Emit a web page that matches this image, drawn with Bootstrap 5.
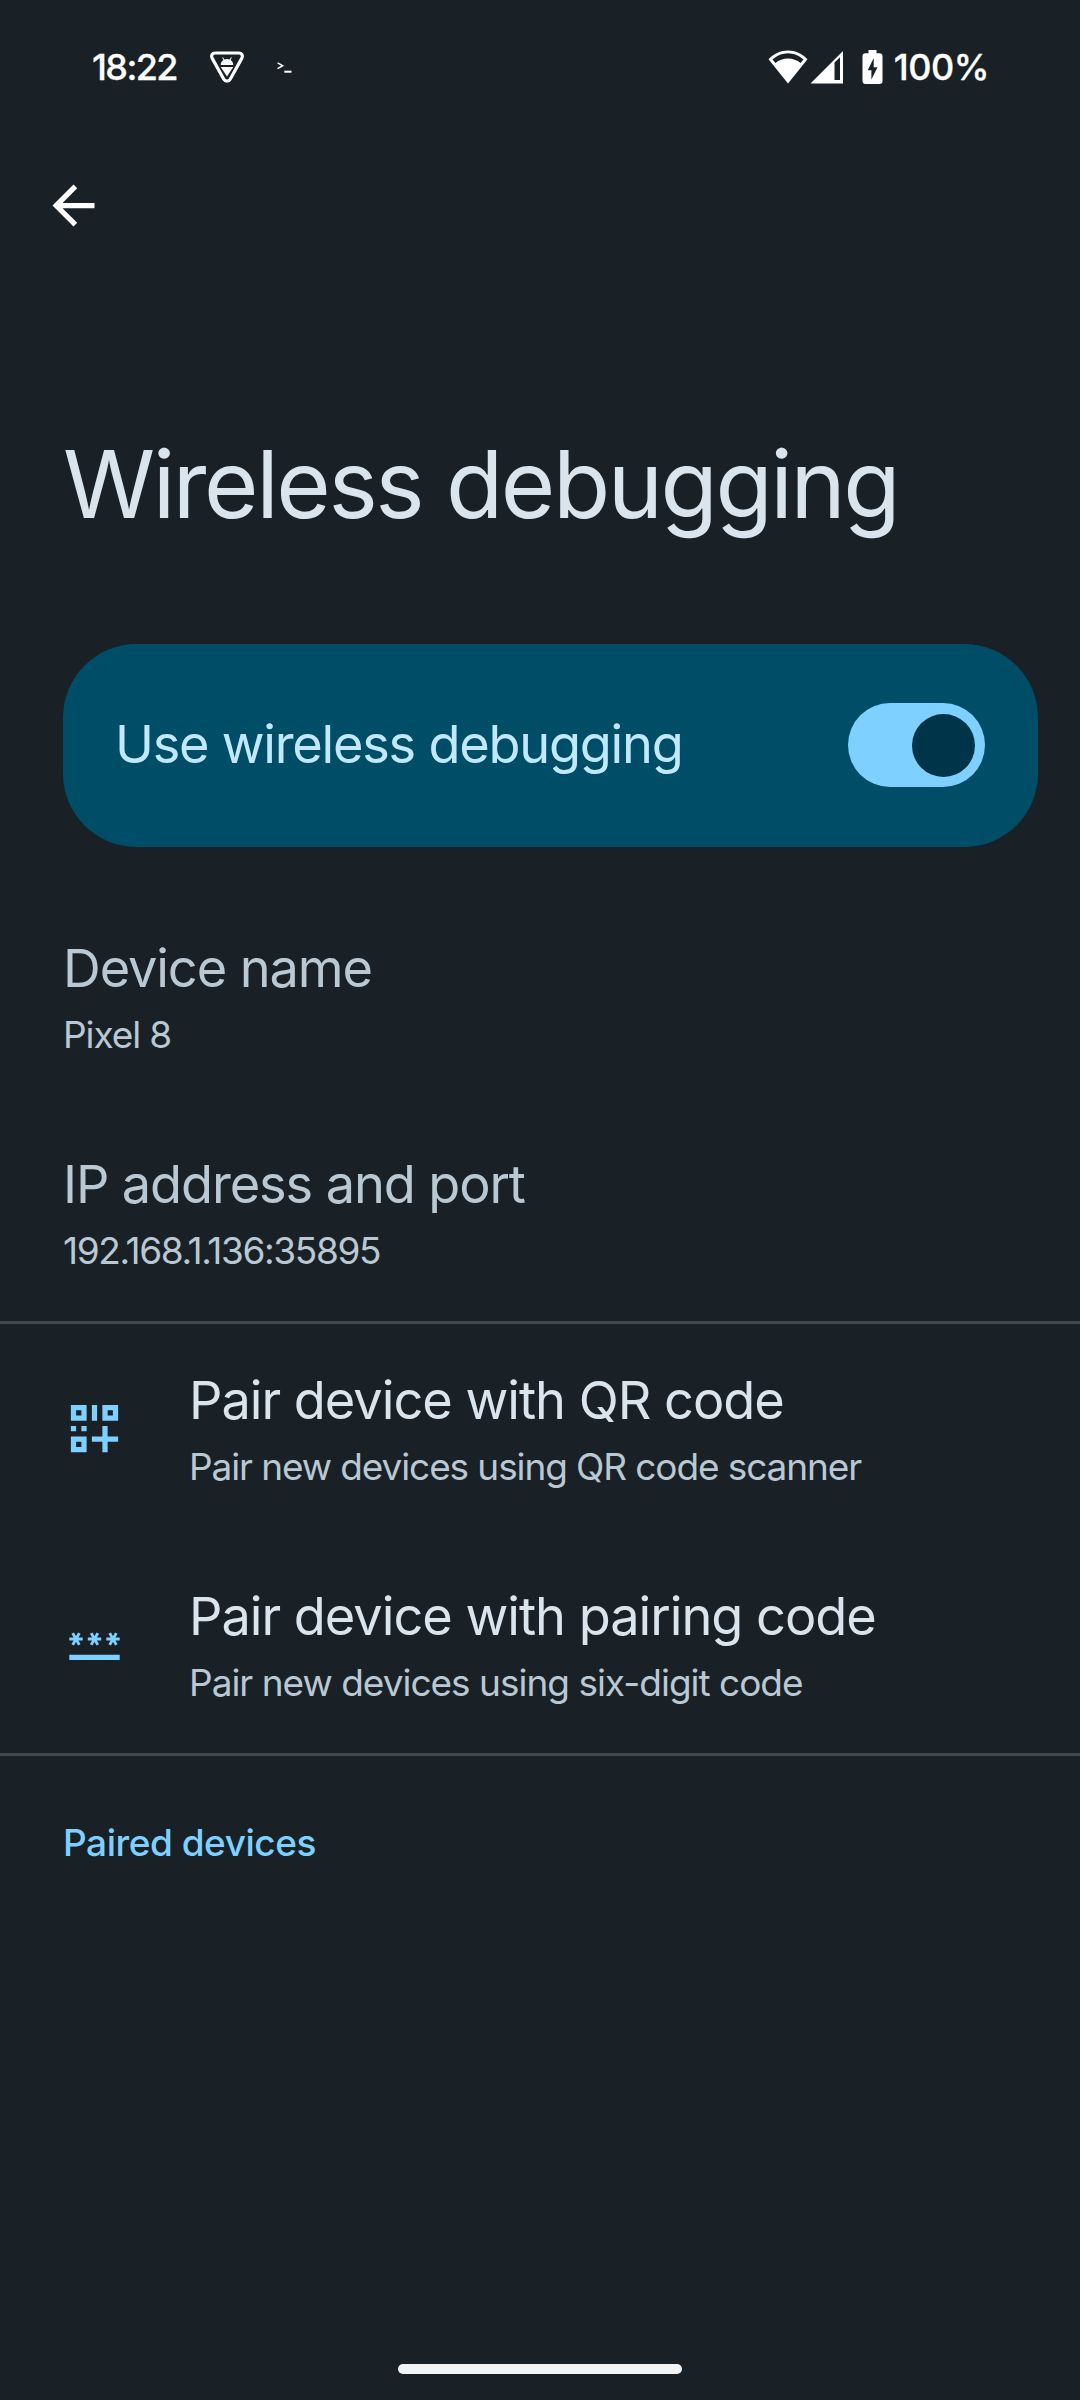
<!DOCTYPE html>
<html lang="en" data-bs-theme="dark">
<head>
<meta charset="utf-8">
<meta name="viewport" content="width=device-width, initial-scale=1">
<title>Wireless debugging</title>
<link href="https://cdn.jsdelivr.net/npm/bootstrap@5.3.0/dist/css/bootstrap.min.css" rel="stylesheet">
<script src="https://cdn.jsdelivr.net/npm/bootstrap@5.3.0/dist/js/bootstrap.bundle.min.js"></script>
<style>
body{background:#192127;color:#dae4ed;font-family:Inter,Roboto,sans-serif;}
.screen{width:1080px;height:2400px;white-space:nowrap}
.screen svg{display:block;flex:none}
.statusbar{height:134px;padding:0 91px 0 92px;color:#fff;font-size:36px;font-weight:500;line-height:50px}
.clock{letter-spacing:-1.6px;width:117px}
.clock,.percent{-webkit-text-stroke:.3px #fff}
.percent{letter-spacing:-.5px;margin-left:11px}
.terminal{margin-left:32px}
.appbar{height:290px;padding:40px 42px}
.page-title{font-size:93.5px;line-height:120px;letter-spacing:-2.45px;font-weight:400;padding-left:63px;color:#dae4ed}
.main-switch{margin:100px 42px 42px 63px;height:203px;border-radius:73.5px;background:#004d67;color:#c2e8ff;padding:0 53px 1px 52px}
.main-switch .label{font-size:52.3px;letter-spacing:-1.24px;padding-bottom:1px}
.toggle{width:137px;height:84px;border-radius:42px;background:#7dd0ff;padding:10.5px}
.thumb{width:63px;height:63px;border-radius:50%;background:#003549}
.pref{height:216px;padding:41px 63px 0}
.pref-title{font-size:52.3px;line-height:76px;letter-spacing:-1.1px}
.pref-sub{font-size:37px;line-height:58px;letter-spacing:-1.1px;color:#b9c8d3}
.muted-pref{color:#b9c8d3}
.digits{letter-spacing:-1.37px}
.tight{letter-spacing:-1px}
.divided{border-top:3px solid #40484d;padding-top:38px}
.pref-icon{width:126px;padding-top:35px;color:#7dd0ff}
.category{border-top:3px solid #40484d;padding:61.5px 63px 0;font-size:37px;line-height:50px;font-weight:500;letter-spacing:-.47px;color:#7dd0ff}
.home-pill{width:284px;height:10px;border-radius:5px;background:#f1f3f4;margin-bottom:26px}
</style>
</head>
<body>
<div class="screen d-flex flex-column overflow-hidden">
  <header class="statusbar d-flex align-items-center flex-shrink-0">
    <span class="clock">18:22</span>
    <svg width="36" height="34" viewBox="0 0 36 34" fill="none">
      <path d="M6.2 3H29.8C32.8 3 34.3 5.6 32.9 8.1L21.2 29.2C19.7 31.8 16.3 31.8 14.8 29.2L3.1 8.1C1.7 5.6 3.2 3 6.2 3Z" stroke="#fff" stroke-width="3.2"/>
      <path d="M11.7 15C11.7 12.8 12.8 11 14.4 10L13.2 7.6L14 7.2L15.4 9.4Q18 8.5 20.6 9.4L22 7.2L22.8 7.6L21.6 10C23.2 11 24.3 12.8 24.3 15ZM11.7 17H24.3L18 26.5Z" fill="#fff"/>
    </svg>
    <svg class="terminal" width="16" height="12" viewBox="0 0 16 12" fill="none" stroke="#fff">
      <path d="M.6 1.8L5.7 4.7L.6 7.6" stroke-width="1.5"/><path d="M7.3 10.7H14.5" stroke-width="2"/>
    </svg>
    <div class="d-flex align-items-center ms-auto">
      <svg width="40" height="34" viewBox="0 0 40 34" fill="#fff">
        <path fill-rule="evenodd" d="M20 33.5L.5 9.2C11-2.4 29-2.4 39.5 9.2ZM4.6 9.5L7.4 13C14.5 7 25.5 7 32.6 13L35.4 9.5C26.5 1.2 13.5 1.2 4.6 9.5Z"/>
      </svg>
      <svg style="margin-left:2px" width="34" height="34" viewBox="0 0 34 34" fill="#fff">
        <path fill-rule="evenodd" d="M.5 33.5L33 1V33.5ZM24.5 12.5V30H30V7.2Z"/>
      </svg>
      <svg style="margin-left:18px" width="21" height="34" viewBox="0 0 21 34" fill="#fff">
        <path fill-rule="evenodd" d="M6.5 0H14.5V3.3H17.5Q20.5 3.3 20.5 6.3V31Q20.5 34 17.5 34H3.5Q.5 34 .5 31V6.3Q.5 3.3 3.5 3.3H6.5ZM11.7 8L5.8 20.3H9.4V29.4L15.5 17.2H11.7Z"/>
      </svg>
      <span class="percent">100%</span>
    </div>
  </header>
  <nav class="appbar flex-shrink-0">
    <svg width="63" height="63" viewBox="0 0 24 24" fill="#fff"><path d="M20 11H7.83l5.59-5.59L12 4l-8 8 8 8 1.41-1.41L7.83 13H20z"/></svg>
  </nav>
  <h1 class="page-title mb-0">Wireless debugging</h1>
  <section class="main-switch d-flex align-items-center justify-content-between flex-shrink-0">
    <span class="label">Use wireless debugging</span>
    <div class="toggle d-flex justify-content-end" role="switch" aria-checked="true"><div class="thumb"></div></div>
  </section>
  <main>
    <div class="pref muted-pref">
      <div class="pref-title">Device name</div>
      <div class="pref-sub">Pixel 8</div>
    </div>
    <div class="pref muted-pref">
      <div class="pref-title">IP address and port</div>
      <div class="pref-sub digits">192.168.1.136:35895</div>
    </div>
    <div class="pref divided d-flex">
      <div class="pref-icon flex-shrink-0">
        <svg width="63" height="63" viewBox="0 0 24 24" fill="currentColor"><path fill-rule="evenodd" d="M3 3H9V9H3ZM5 5V7H7V5ZM11 3H13V9H11ZM15 3H21V9H15ZM17 5V7H19V5ZM3 11H5V13H3ZM7 11H9V13H7ZM3 15H9V21H3ZM5 17V19H7V17ZM15 11H17V15H21V17H17V21H15V17H11V15H15Z"/></svg>
      </div>
      <div>
        <div class="pref-title tight">Pair device with QR code</div>
        <div class="pref-sub">Pair new devices using QR code scanner</div>
      </div>
    </div>
    <div class="pref d-flex">
      <div class="pref-icon flex-shrink-0">
        <svg width="63" height="63" viewBox="0 0 63 63" fill="none" stroke="currentColor" stroke-width="2.9">
          <defs><path id="star" d="M-6.7 0H6.7M-3.3-5.9L3.3 5.9M3.3-5.9L-3.3 5.9"/></defs>
          <use href="#star" x="13" y="26"/><use href="#star" x="31.5" y="26"/><use href="#star" x="50" y="26"/>
          <path d="M6.3 44.4H56.7" stroke-width="5.2"/>
        </svg>
      </div>
      <div>
        <div class="pref-title tight">Pair device with pairing code</div>
        <div class="pref-sub tight">Pair new devices using six-digit code</div>
      </div>
    </div>
    <div class="category">Paired devices</div>
  </main>
  <div class="home-pill mt-auto mx-auto flex-shrink-0"></div>
</div>
</body>
</html>
